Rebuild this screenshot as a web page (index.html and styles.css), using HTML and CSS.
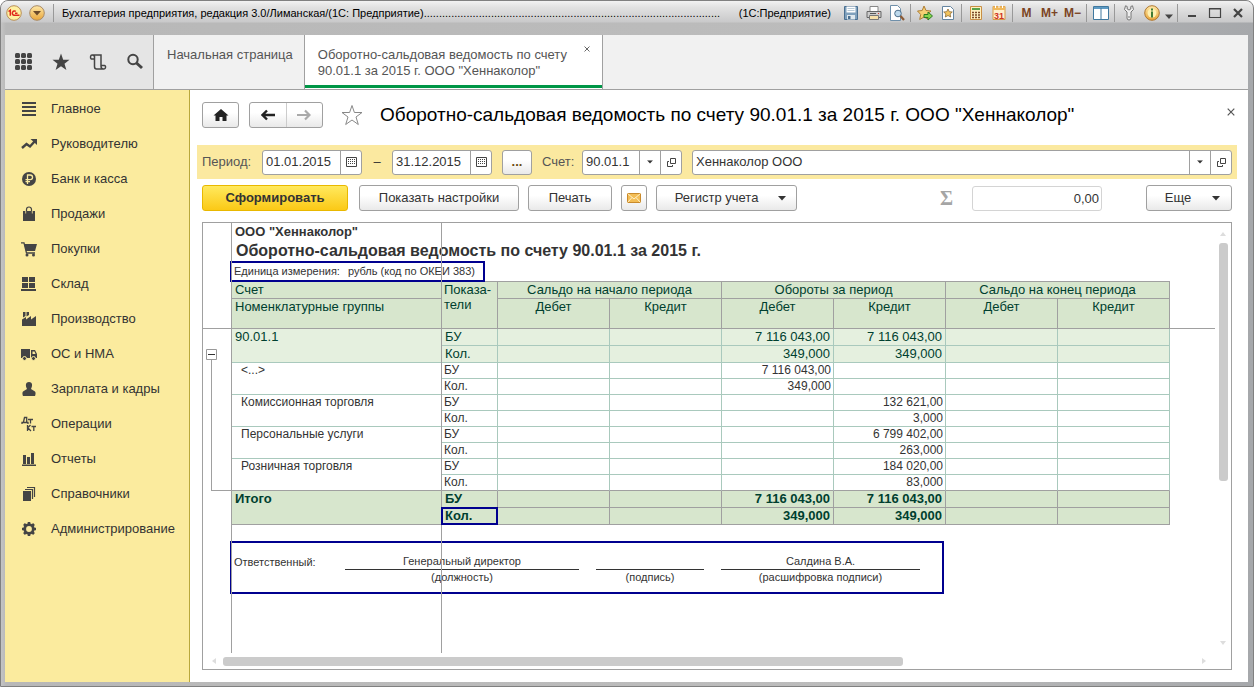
FILE: index.html
```html
<!DOCTYPE html>
<html lang="ru">
<head>
<meta charset="utf-8">
<title>Бухгалтерия предприятия, редакция 3.0</title>
<link rel="stylesheet" href="styles.css">
</head>
<body>
<svg class="defs" aria-hidden="true">
  <defs>
    <linearGradient id="gold" x1="0" y1="0" x2="0" y2="1"><stop offset="0" stop-color="#ffe9a8"/><stop offset="1" stop-color="#e8a53a"/></linearGradient>
    <symbol id="calendar" viewBox="0 0 11 10"><path d="M.5.500h10v9H.5z" fill="none" stroke="#444"/><path d="M2 3h1M4 3h1M6 3h1M8 3h1M2 5h1M4 5h1M6 5h1M8 5h1M2 7h1M4 7h1M6 7h1M8 7h1" transform="translate(0 -.5)" stroke="#444"/></symbol>
    <symbol id="open" viewBox="0 0 9 9"><path d="M3.500.5h5v5h-5z" fill="none" stroke="#444"/><path d="M2 3.500H.5v5h5V7" fill="none" stroke="#444"/></symbol>
    <symbol id="caret" viewBox="0 0 8 5"><path d="M0 0h8L4 4.500z" fill="#333"/></symbol>
    <symbol id="cross" viewBox="0 0 8 8"><path d="M.7.7l6.600 6.600M7.300.7L.7 7.300" stroke="#555" stroke-width="1.200" fill="none"/></symbol>
  </defs>
</svg>
<div class="window">
  <header class="titlebar">
    <svg class="logo" viewBox="0 0 16 16"><circle cx="8" cy="8" r="7.300" fill="#fff0a0" stroke="#b98f58"/><path d="M2.500 6.500L4.300 5.200V10.800M9.800 6.400A2.200 2.200 0 1 0 7.900 10.300H13.500M9 8.300H11.500" fill="none" stroke="#e0261c" stroke-width="1.500"/></svg>
    <button class="round" aria-label="Меню"><svg viewBox="0 0 16 16"><circle cx="8" cy="8" r="7.300" fill="url(#gold)" stroke="#a98a66"/><path d="M4 6h8l-4 4.500z" fill="#6b4a2a"/></svg></button>
    <span class="sep"></span>
    <div class="caption"><span>Бухгалтерия предприятия, редакция 3.0/Лиманская/(1С: Предприятие)</span><span class="dots">.................................................................................................</span><span class="product">(1С:Предприятие)</span></div>
    <div class="tools">
      <button class="tool" aria-label="Сохранить"><svg viewBox="0 0 16 16"><path d="M1.500 1.500h13v13h-13z" fill="#7fa0bc" stroke="#4a6f90"/><path d="M3.500 1.500h9v6h-9z" fill="#fff"/><path d="M4.500 3.500h7M4.500 5.500h7" stroke="#b9cbd8"/><path d="M4 10h8v4.500H4z" fill="#dfe8ee"/><path d="M5 11h2.500v3H5z" fill="#4a6f90"/></svg></button>
      <button class="tool" aria-label="Печать документа"><svg viewBox="0 0 16 16"><path d="M4 1.500h8V7H4z" fill="#fff" stroke="#888"/><path d="M1 6.500h14v6H1z" fill="#ccc" stroke="#666"/><path d="M3.500 10.500h9v4h-9z" fill="#f6dfa9" stroke="#777"/><path d="M4 8.500h6" stroke="#555"/><path d="M12 8.500h1" stroke="#d33"/></svg></button>
      <button class="tool" aria-label="Просмотр"><svg viewBox="0 0 16 16"><path d="M1.500.5h7l3 3v12h-10z" fill="#fff" stroke="#7090aa"/><circle cx="9" cy="8.500" r="3.300" fill="#bdd9ec" stroke="#4d6f8c"/><path d="M11.500 11l3.500 4" stroke="#8b5a35" stroke-width="2.200"/></svg></button>
      <span class="sep"></span>
      <button class="tool" aria-label="В избранное"><svg viewBox="0 0 16 16"><path d="M7 1l2 4.500 5 .5-3.700 3.300 1 5L7 12l-4.300 2.500 1-5L.5 6l4.700-.5z" fill="#f6cf74" stroke="#ae7e35"/><path d="M7 9.500h4V7l4.500 4-4.500 4v-2.500H7z" fill="#86d44c" stroke="#2c7b24"/></svg></button>
      <button class="tool" aria-label="Избранное окно"><svg viewBox="0 0 16 16"><path d="M2.500 1.500h8l3 3v10h-11z" fill="#fff" stroke="#6585a0"/><path d="M8 4l1.300 2.700 3 .3-2.200 2 .6 3L8 10.500 5.300 12l.6-3-2.200-2 3-.3z" fill="#f3c45c" stroke="#8a6a35" stroke-width=".8"/></svg></button>
      <span class="sep"></span>
      <button class="tool" aria-label="Калькулятор"><svg viewBox="0 0 16 16"><path d="M2.500 1.500h11v13h-11z" fill="#fff1bf" stroke="#c98f45"/><path d="M4 3h8v2H4z" fill="#58a34c"/><path d="M4 7.500h8M4 10h8M4 12.500h8" stroke="#7b4a2a" stroke-width="1.300" stroke-dasharray="2 1"/></svg></button>
      <button class="tool" aria-label="Календарь"><svg viewBox="0 0 16 16"><path d="M2 1.500h12v13H2z" fill="#fff0cc" stroke="#d69a4a"/><path d="M2 1.500h12V5H2z" fill="#f0b95c"/><path d="M4.500 0v3M8 0v3M11.500 0v3" stroke="#fff"/><text x="8" y="13.500" class="day">31</text></svg></button>
      <span class="sep"></span>
      <button class="tool memory">M</button>
      <button class="tool memory">M+</button>
      <button class="tool memory">M−</button>
      <span class="sep"></span>
      <button class="tool" aria-label="Панели"><svg viewBox="0 0 16 16"><path d="M.5 1.500h15v13H.5z" fill="#fff" stroke="#40789e"/><path d="M1 2h14v2H1z" fill="#5e9bc4"/><path d="M8 3v11" stroke="#40789e"/></svg></button>
      <span class="sep"></span>
      <button class="tool" aria-label="Настройки"><svg viewBox="0 0 16 16"><path d="M4.500.8L3.500 4.500 6 7v6a2 2 0 0 0 4 0V7l2.500-2.500L11.500.8 9.800 1.500V4L8 5 6.200 4V1.500z" fill="#eee" stroke="#777"/><path d="M8 11v2" stroke="#777"/></svg></button>
      <button class="tool" aria-label="Справка"><svg viewBox="0 0 16 16"><circle cx="8" cy="8" r="7.300" fill="url(#gold)" stroke="#b0782f"/><circle cx="8" cy="8" r="4.500" fill="#fff0b0"/><path d="M8 3.500v2M8 6.500v6" stroke="#3f7b35" stroke-width="2"/></svg></button>
      <button class="tool narrow" aria-label="Ещё команды"><svg viewBox="0 0 8 16"><path d="M0 9.500h8L4 14z" fill="#444"/></svg></button>
      <span class="sep"></span>
      <button class="tool" aria-label="Свернуть"><svg viewBox="0 0 16 16"><path d="M4 11h8" stroke="#444" stroke-width="2"/></svg></button>
      <button class="tool" aria-label="Развернуть"><svg viewBox="0 0 16 16"><path d="M2.500 3.500h11v9h-11z" fill="none" stroke="#444" stroke-width="1.200"/><path d="M2 4h12" stroke="#444"/></svg></button>
      <button class="tool" aria-label="Закрыть окно"><svg viewBox="0 0 16 16"><path d="M4 4l8 8M12 4l-8 8" stroke="#444" stroke-width="2.200"/></svg></button>
    </div>
  </header>

  <div class="tabbar">
    <div class="quick">
      <button class="quick-btn" aria-label="Разделы"><svg viewBox="0 0 18 18"><g fill="#444"><rect x="0" y="0" width="5" height="5" rx="1.500"/><rect x="6" y="0" width="5" height="5" rx="1.500"/><rect x="12" y="0" width="5" height="5" rx="1.500"/><rect x="0" y="6" width="5" height="5" rx="1.500"/><rect x="6" y="6" width="5" height="5" rx="1.500"/><rect x="12" y="6" width="5" height="5" rx="1.500"/><rect x="0" y="12" width="5" height="5" rx="1.500"/><rect x="6" y="12" width="5" height="5" rx="1.500"/><rect x="12" y="12" width="5" height="5" rx="1.500"/></g></svg></button>
      <button class="quick-btn" aria-label="Избранное"><svg viewBox="0 0 18 18"><path d="M9 .5l2.200 6.200H17.500l-5 4 1.900 6.300L9 13.200 3.600 17l1.900-6.300-5-4h6.300z" fill="#444"/></svg></button>
      <button class="quick-btn" aria-label="История"><svg viewBox="0 0 18 18"><path d="M5.500 6H2.200C1 5 1.400 2 3 2h9v11.500M5.500 3v10.500c0 2 1 2.500 2 2.500h7.500c2 0 2-3.500.5-3.500h-3M3 2c2 0 2.500.6 2.500 2M12 13c0 2 .5 3 2.500 3" fill="none" stroke="#444" stroke-width="1.500"/></svg></button>
      <button class="quick-btn" aria-label="Поиск"><svg viewBox="0 0 18 18"><circle cx="7" cy="6.500" r="4.700" fill="none" stroke="#444" stroke-width="2"/><path d="M10.500 10l5.500 5" stroke="#444" stroke-width="3"/></svg></button>
    </div>
    <a class="tab" href="#home">Начальная страница</a>
    <div class="tab tab-active"><a href="#report">Оборотно-сальдовая ведомость по счету 90.01.1 за 2015 г. ООО "Хеннаколор"</a><button class="tab-close" aria-label="Закрыть вкладку"><svg viewBox="0 0 8 8"><use href="#cross"/></svg></button></div>
  </div>

  <div class="body">
    <nav class="sidebar">
      <a class="nav" href="#n1"><svg viewBox="0 0 16 16"><path d="M1 2h14M1 6h14M1 10h14M1 14h14" stroke-width="1.800"/></svg>Главное</a>
      <a class="nav" href="#n2"><svg viewBox="0 0 16 16"><path d="M1 12l4.500-4 3.500 2.500L14 5" stroke-width="2.400"/><path class="f" d="M9.500 3H16v6z"/></svg>Руководителю</a>
      <a class="nav" href="#n3"><svg viewBox="0 0 16 16"><circle class="f" cx="8" cy="8" r="7"/><path class="y" d="M6.500 13V4h2.700a2.300 2.300 0 0 1 0 4.700H4.500M4.500 10.700H9" stroke-width="1.300"/></svg>Банк и касса</a>
      <a class="nav" href="#n4"><svg viewBox="0 0 16 16"><path class="f" d="M2 5h12v10H2z"/><path d="M5.500 7V3.500a2.500 2.500 0 0 1 5 0V7" stroke-width="1.200"/><path class="y" d="M4.700 5v2.500M11.300 5v2.500" stroke-width=".8"/></svg>Продажи</a>
      <a class="nav" href="#n5"><svg viewBox="0 0 16 16"><path class="f" d="M3 3h13l-2 7H5z"/><path d="M0 1.800h3L5.500 12H14" stroke-width="1.300"/><circle class="f" cx="6" cy="14" r="1.500"/><circle class="f" cx="12.500" cy="14" r="1.500"/></svg>Покупки</a>
      <a class="nav" href="#n6"><svg viewBox="0 0 16 16"><path class="f" d="M1 1h6v5H1zM8 1h6v5H8zM1 7h6v5H1zM8 7h6v5H8zM0 13h15v2H0z"/></svg>Склад</a>
      <a class="nav" href="#n7"><svg viewBox="0 0 16 16"><path class="f" d="M1 15V8.500L5 6v2.500L10 5v3.500L15 5v10zM2 1h2.500v4L2 6.500zM5.500 1H8v3L5.500 5.500z"/></svg>Производство</a>
      <a class="nav" href="#n8"><svg viewBox="0 0 16 16"><path class="f" d="M0 3h9v9H0zM10 4h4l2 4v4h-6z"/><path class="yf" d="M11.500 5.500h2l1 2.500h-3z"/><circle class="f yo" cx="3.500" cy="12.500" r="2"/><circle class="f yo" cx="12.500" cy="12.500" r="2"/></svg>ОС и НМА</a>
      <a class="nav" href="#n9"><svg viewBox="0 0 16 16"><path class="f" d="M8 1c4 0 3.500 4 2 7l4 2.500c1 1 .500 3.500 0 4.500H2c-.5-1-1-3.500 0-4.500L6 8C4.500 5 4 1 8 1z"/></svg>Зарплата и кадры</a>
      <a class="nav" href="#n10"><svg viewBox="0 0 16 16"><path d="M1 8V6.500h6V8M2.500 6L3.500 1.500h2.200V6M7 3.500h5M9.500 3.500v4M6.500 9v6M6.500 12l3-3M7 12l3 3M10.500 10.500H15M12.800 10.500V15" stroke-width="1.300"/></svg>Операции</a>
      <a class="nav" href="#n11"><svg viewBox="0 0 16 16"><path class="f" d="M2 4h3v9H2zM6 6h3v7H6zM10 2h3v11h-3zM1 13.500h14V15H1z"/></svg>Отчеты</a>
      <a class="nav" href="#n12"><svg viewBox="0 0 16 16"><path class="f" d="M2 5h8v10H2z"/><path d="M4 3.500h7.500V13M6 1.500h7.500V11" stroke-width="1.200"/></svg>Справочники</a>
      <a class="nav" href="#n13"><svg viewBox="0 0 16 16"><circle cx="8" cy="8" r="4.300" stroke-width="2.800"/><path d="M8 1v2.500M8 12.500V15M1 8h2.500M12.500 8H15M3 3l2 2M11 11l2 2M13 3l-2 2M5 11l-2 2" stroke-width="2.600"/></svg>Администрирование</a>
    </nav>

    <main class="content">
      <div class="heading">
        <button class="btn home" aria-label="На главную"><svg viewBox="0 0 16 14"><path d="M8 1l7.500 6.500h-2V13h-4V9h-3v4h-4V7.500h-2z" fill="#222"/></svg></button>
        <div class="history">
          <button class="history-btn" aria-label="Назад"><svg viewBox="0 0 14 12"><path d="M14 6H3M6 1.500L1.500 6 6 10.500" fill="none" stroke="#222" stroke-width="2.400"/></svg></button>
          <button class="history-btn" aria-label="Вперед" disabled><svg viewBox="0 0 14 12"><path d="M0 6h11M8 1.500L12.500 6 8 10.500" fill="none" stroke="#aaa" stroke-width="2.200"/></svg></button>
        </div>
        <button class="plain star" aria-label="Добавить в избранное"><svg viewBox="0 0 22 22"><path d="M11 1.500l2.400 7H21l-6 4.500 2.300 7.500L11 16l-6.300 4.500L7 13 1 8.500h7.600z" fill="#fff" stroke="#888"/></svg></button>
        <h1 class="title">Оборотно-сальдовая ведомость по счету 90.01.1 за 2015 г. ООО "Хеннаколор"</h1>
        <button class="plain close" aria-label="Закрыть"><svg viewBox="0 0 8 8"><use href="#cross"/></svg></button>
      </div>

      <div class="filter">
        <label class="filter-label" for="from">Период:</label>
        <div class="field"><input id="from" type="text" value="01.01.2015"><button aria-label="Выбрать начало"><svg class="i-cal" viewBox="0 0 11 10"><use href="#calendar"/></svg></button></div>
        <span class="dash">–</span>
        <div class="field"><input type="text" value="31.12.2015" aria-label="Конец периода"><button aria-label="Выбрать конец"><svg class="i-cal" viewBox="0 0 11 10"><use href="#calendar"/></svg></button></div>
        <button class="btn more-dates">...</button>
        <label class="filter-label account-label" for="acc">Счет:</label>
        <div class="field"><input id="acc" type="text" value="90.01.1"><button aria-label="Список счетов"><svg class="i-caret" viewBox="0 0 8 5"><use href="#caret"/></svg></button><button aria-label="Открыть счет"><svg class="i-open" viewBox="0 0 9 9"><use href="#open"/></svg></button></div>
        <div class="field field-wide"><input type="text" value="Хеннаколор ООО" aria-label="Организация"><button aria-label="Список организаций"><svg class="i-caret" viewBox="0 0 8 5"><use href="#caret"/></svg></button><button aria-label="Открыть организацию"><svg class="i-open" viewBox="0 0 9 9"><use href="#open"/></svg></button></div>
      </div>

      <div class="toolbar">
        <button class="btn primary">Сформировать</button>
        <button class="btn settings">Показать настройки</button>
        <button class="btn print">Печать</button>
        <button class="btn mail" aria-label="Отправить"><svg viewBox="0 0 14 10"><path d="M.5.500h13v9H.5z" fill="#f3bd55" stroke="#c98a2c"/><path d="M.5.500L7 6l6.500-5.500M.5 9.500L5 4.500M13.500 9.500L9 4.500" fill="none" stroke="#fff0c8"/></svg></button>
        <button class="btn register"><span>Регистр учета</span><svg class="i-drop" viewBox="0 0 8 5"><use href="#caret"/></svg></button>
        <span class="sigma">Σ</span>
        <input class="sum" type="text" value="0,00" aria-label="Сумма">
        <button class="btn more"><span>Еще</span><svg class="i-drop" viewBox="0 0 8 5"><use href="#caret"/></svg></button>
      </div>

      <section class="sheet">
        <div class="gutter">
          <button class="collapse" aria-label="Свернуть группу"><svg viewBox="0 0 11 11"><path d="M.5.500h10v10H.5z" fill="#fff" stroke="#999"/><path d="M2 5.500h7" stroke="#333"/></svg></button>
          <div class="bracket"></div>
        </div>
        <div class="report">
          <p class="org">ООО "Хеннаколор"</p>
          <h2 class="report-title">Оборотно-сальдовая ведомость по счету 90.01.1 за 2015 г.</h2>
          <p class="unit"><span>Единица измерения:</span><span>рубль (код по ОКЕИ 383)</span></p>
          <table class="ledger">
            <colgroup><col class="c-name"><col class="c-ind"><col><col><col><col><col><col></colgroup>
            <thead>
              <tr class="h1"><th>Счет</th><th rowspan="2">Показа-<br>тели</th><th colspan="2">Сальдо на начало периода</th><th colspan="2">Обороты за период</th><th colspan="2">Сальдо на конец периода</th></tr>
              <tr class="h2"><th>Номенклатурные группы</th><th>Дебет</th><th>Кредит</th><th>Дебет</th><th>Кредит</th><th>Дебет</th><th>Кредит</th></tr>
            </thead>
            <tbody class="group">
              <tr><td rowspan="2">90.01.1</td><td>БУ</td><td></td><td></td><td>7 116 043,00</td><td>7 116 043,00</td><td></td><td></td></tr>
              <tr><td>Кол.</td><td></td><td></td><td>349,000</td><td>349,000</td><td></td><td></td></tr>
            </tbody>
            <tbody class="detail">
              <tr><td class="name" rowspan="2">&lt;...&gt;</td><td>БУ</td><td></td><td></td><td>7 116 043,00</td><td></td><td></td><td></td></tr>
              <tr><td>Кол.</td><td></td><td></td><td>349,000</td><td></td><td></td><td></td></tr>
              <tr><td class="name" rowspan="2">Комиссионная торговля</td><td>БУ</td><td></td><td></td><td></td><td>132 621,00</td><td></td><td></td></tr>
              <tr><td>Кол.</td><td></td><td></td><td></td><td>3,000</td><td></td><td></td></tr>
              <tr><td class="name" rowspan="2">Персональные услуги</td><td>БУ</td><td></td><td></td><td></td><td>6 799 402,00</td><td></td><td></td></tr>
              <tr><td>Кол.</td><td></td><td></td><td></td><td>263,000</td><td></td><td></td></tr>
              <tr><td class="name last" rowspan="2">Розничная торговля</td><td>БУ</td><td></td><td></td><td></td><td>184 020,00</td><td></td><td></td></tr>
              <tr><td>Кол.</td><td></td><td></td><td></td><td>83,000</td><td></td><td></td></tr>
            </tbody>
            <tfoot>
              <tr><td rowspan="2">Итого</td><td>БУ</td><td></td><td></td><td>7 116 043,00</td><td>7 116 043,00</td><td></td><td></td></tr>
              <tr><td class="selected">Кол.</td><td></td><td></td><td>349,000</td><td>349,000</td><td></td><td></td></tr>
            </tfoot>
          </table>
          <div class="signature">
            <span class="sig-label">Ответственный:</span>
            <div class="sig"><span class="sig-value">Генеральный директор</span><span>(должность)</span></div>
            <div class="sig"><span class="sig-value"></span><span>(подпись)</span></div>
            <div class="sig"><span class="sig-value">Салдина В.А.</span><span>(расшифровка подписи)</span></div>
          </div>
        </div>
        <div class="vscroll"><svg viewBox="0 0 6 4"><path d="M0 4h6L3 0z"/></svg><div class="vthumb"></div><svg viewBox="0 0 6 4"><path d="M0 0h6L3 4z"/></svg></div>
        <div class="hscroll"><svg viewBox="0 0 4 6"><path d="M4 0v6L0 3z"/></svg><div class="track"><div class="hthumb"></div></div><svg viewBox="0 0 4 6"><path d="M0 0v6l4-3z"/></svg></div>
        <div class="freeze freeze-gutter"></div>
        <div class="freeze freeze-name"></div>
        <div class="freeze-head"></div>
      </section>
    </main>
  </div>
</div>
</body>
</html>
```
FILE: styles.css
```css
* { box-sizing: border-box; }
body {
  margin: 0;
  font: 13px/16px "Liberation Sans", Arial, sans-serif;
  color: #333;
  background: #fff;
}
button, input { font: inherit; color: inherit; margin: 0; }
button { padding: 0; border: 0; background: none; display: flex; align-items: center; justify-content: center; }
a { color: inherit; text-decoration: none; }
p, h1, h2 { margin: 0; font-weight: normal; }
svg { display: block; flex: none; }
.defs { position: absolute; width: 0; height: 0; }

.window {
  display: flex;
  flex-direction: column;
  min-height: 100vh;
  padding: 0 5px 4px 4px;
  border: 1px solid #808080;
  border-radius: 8px 8px 0 0;
  background: linear-gradient(90deg, #c4c4c4, #b8b8b8 5px, #bcbcbc 70%, #a6a8ab);
}

/* Title bar */
.titlebar {
  display: flex;
  align-items: center;
  height: 34px;
  margin: 0 -5px 0 -4px;
  padding: 0 4px 10px 5px;
  border-radius: 7px 7px 0 0;
  background: linear-gradient(180deg, #f2f2f2, #e2e2e2 6px, #c9c9ca 21px, rgba(190, 190, 190, 0) 22px);
}
.logo, .round svg { width: 16px; height: 16px; }
.round { margin: 0 6px 0 7px; }
.sep { width: 5px; height: 18px; flex: none; background: linear-gradient(#999, #999) 2px 0 / 1px 100% no-repeat; }
.caption { display: flex; flex: 1; min-width: 0; margin-left: 6px; font-size: 11px; color: #000; white-space: nowrap; }
.dots { flex: 1; margin-right: 6px; }
.product { margin-right: 8px; }
.tools { display: flex; align-items: center; }
.tool { width: 23px; height: 18px; }
.tool svg { width: 16px; height: 16px; }
.tool.narrow { width: 12px; }
.tool.narrow svg { width: 8px; }
.memory { font-weight: bold; font-size: 12px; color: #7b4424; }
.day { font: bold 9px "Liberation Sans", sans-serif; fill: #cf3425; text-anchor: middle; }

/* Tabs */
.tabbar { display: flex; height: 55px; background: #f1f1f1; border-bottom: 1px solid #a0a0a0; }
.quick { display: flex; align-items: center; gap: 19px; width: 149px; padding-left: 10px; background: #e5e5e5; border-right: 1px solid #a0a0a0; }
.quick-btn svg { width: 18px; height: 18px; }
.tab { display: block; padding: 12px 11px 0 13px; color: #555; border-right: 1px solid #a0a0a0; }
.tab-active { position: relative; width: 298px; background: #fff; box-shadow: inset 0 -1px #fff, inset 0 -4px #009646; }
.tab-close { position: absolute; top: 11px; right: 12px; }
.tab-close svg { width: 6px; height: 6px; }

/* Sections panel */
.body { display: flex; flex: 1; background: #fff; }
.sidebar { width: 185px; flex: none; padding-top: 1px; background: #fbeb9e; border-right: 1px solid #b9a83c; }
.nav { display: flex; align-items: center; height: 35px; padding-left: 16px; gap: 14px; }
.nav svg { width: 16px; height: 16px; fill: none; stroke: #444; }
.nav .f { fill: #444; stroke: none; }
.nav .y { stroke: #fbeb9e; }
.nav .yf { fill: #fbeb9e; stroke: none; }
.nav .yo { stroke: #fbeb9e; stroke-width: 1; }

/* Form */
.content { display: flex; flex-direction: column; flex: 1; min-width: 0; padding: 12px 16px 12px 12px; }
.btn {
  height: 26px;
  border: 1px solid #a0a0a0;
  border-radius: 3px;
  background: linear-gradient(#fff 40%, #e9e9e9);
}
.heading { display: flex; align-items: center; height: 26px; }
.home { width: 37px; }
.home svg { width: 16px; height: 14px; }
.history { display: flex; width: 74px; height: 26px; margin-left: 10px; border: 1px solid #a0a0a0; border-radius: 3px; background: linear-gradient(#fff 40%, #e9e9e9); }
.history-btn { flex: 1; }
.history-btn + .history-btn { border-left: 1px solid #ccc; }
.history-btn svg { width: 14px; height: 12px; }
.star { margin: 0 17px 0 18px; }
.star svg { width: 22px; height: 22px; }
.title { flex: 1; min-width: 0; font-size: 19px; line-height: 26px; color: #000; white-space: nowrap; }
.close { margin-right: -3px; padding-bottom: 6px; }
.close svg { width: 8px; height: 8px; }

.filter { display: flex; align-items: center; height: 34px; margin: 17px -5px 6px; padding: 0 5px; background: #fbe9a0; }
.filter-label { width: 60px; color: #555; }
.field { display: flex; width: 100px; height: 25px; border: 1px solid #a0a0a0; border-radius: 3px; background: #fff; }
.field input { flex: 1; min-width: 0; padding: 0 3px; border: 0; background: none; }
.field button { width: 21px; border-left: 1px solid #a0a0a0; }
.i-cal { width: 11px; height: 10px; }
.i-open { width: 9px; height: 9px; }
.i-caret { width: 6px; height: 4px; }
.i-drop { width: 8px; height: 5px; }
.dash { width: 30px; text-align: center; }
.more-dates { width: 30px; height: 25px; margin: 0 10px; color: #6b4a10; font-weight: bold; }
.account-label { width: 40px; }
.field-wide { flex: 1; margin-left: 10px; }

.toolbar { display: flex; align-items: center; gap: 9px; height: 26px; }
.primary { width: 146px; margin-right: 2px; font-weight: bold; border-color: #e9b800; background: linear-gradient(#ffe95e, #fbc916); }
.settings { width: 160px; }
.print { width: 84px; }
.mail { width: 26px; }
.mail svg { width: 14px; height: 10px; }
.register { width: 141px; padding-left: 8px; gap: 20px; }
.sigma { margin: 0 10px 0 auto; font: bold 20px/26px "Liberation Serif", serif; color: #a5a5a5; }
.sum { width: 130px; height: 25px; padding: 0 2px; text-align: right; border: 1px solid #d4d4d4; border-radius: 3px; }
.more { width: 86px; margin-left: 35px; padding-left: 7px; gap: 21px; }

/* Report sheet */
.sheet {
  position: relative;
  display: grid;
  grid-template: 1fr 16px / 29px 1fr 16px;
  flex: 1;
  margin-top: 11px;
  border: 1px solid #a0a0a0;
}
.gutter { display: flex; flex-direction: column; padding-top: 126px; }
.collapse { width: 11px; margin-left: 3px; }
.collapse svg { width: 11px; height: 11px; }
.bracket { height: 131px; margin-left: 8px; border: solid #a0a0a0; border-width: 0 0 1px 1px; }
.report { min-width: 0; overflow: visible; }
.org { padding-left: 3px; font-weight: bold; line-height: 17px; }
.report-title { padding-left: 4px; font-size: 16px; line-height: 21px; font-weight: bold; white-space: nowrap; }
.unit {
  position: relative;
  display: flex;
  gap: 8px;
  width: 255px;
  height: 21px;
  margin: 0 0 -1px -2px;
  padding-left: 2px;
  border: 2px solid #00008f;
  font-size: 11px;
  line-height: 17px;
  white-space: nowrap;
}
.ledger { width: 938px; table-layout: fixed; border-spacing: 0; color: #003f2f; }
.c-name { width: 210px; }
.c-ind { width: 56px; }
.ledger th, .ledger td {
  padding: 0 3px;
  border: solid #a9c9bd;
  border-width: 0 1px 1px 0;
  text-align: right;
  vertical-align: top;
  line-height: 16px;
}
.ledger th { font-weight: normal; text-align: center; background: #d7e6cd; border-color: #a0a0a0; }
.ledger th:first-child, .h1 th:nth-child(2) { text-align: left; }
.h1 th { border-top-width: 1px; }
.h1 th:nth-child(2) { padding: 0 2px; line-height: 15px; }
.h2 th { height: 30px; }
.ledger td[rowspan], .ledger tr td:first-child, .ledger td[rowspan] + td { text-align: left; }
.ledger td[rowspan], thead th:first-child { border-right-color: #a0a0a0; }
.group td { height: 17px; background: #e5f0df; }
.detail td { height: 16px; padding: 0 2px; line-height: 15px; font-size: 12px; color: #333; }
.detail .name { padding-left: 9px; }
.detail .last, .detail tr:last-child td { border-bottom-color: #a0a0a0; }
.ledger tfoot td { height: 17px; background: #d7e6cd; border-color: #a0a0a0; font-weight: bold; }
.selected { position: relative; }
.selected::after { content: ""; position: absolute; z-index: 1; inset: -1px; border: 2px solid #00008f; }

.signature {
  position: relative;
  display: grid;
  grid-template-columns: 94px 234px 108px 199px;
  column-gap: 17px;
  width: 714px;
  height: 53px;
  margin: 16px 0 0 -2px;
  padding: 11px 0 0 2px;
  border: 2px solid #00008f;
  font-size: 11px;
}
.sig { display: flex; flex-direction: column; align-items: center; line-height: 15px; }
.sig-value { width: 100%; height: 16px; border-bottom: 1px solid #333; text-align: center; }

.vscroll { display: flex; flex-direction: column; align-items: center; padding: 9px 0 8px; }
.vscroll svg, .hscroll svg { fill: #ddd; }
.vscroll svg { width: 6px; height: 4px; }
.vthumb { width: 9px; height: 238px; margin: 7px 0 auto; border-radius: 3px; background: #cbcbcb; }
.hscroll { grid-column: 1 / 3; display: flex; align-items: center; gap: 7px; padding: 0 9px; }
.hscroll svg { width: 4px; height: 6px; }
.track { flex: 1; }
.hthumb { width: 70%; height: 9px; border-radius: 3px; background: #cbcbcb; }

/* Lines of the fixed rows and columns run over the cells */
.freeze { position: absolute; top: 0; bottom: 16px; width: 1px; background: #a0a0a0; }
.freeze-gutter { left: 28px; }
.freeze-name { left: 238px; }
.freeze-head { position: absolute; top: 105px; left: 0; right: 16px; height: 1px; background: #a0a0a0; }
```
